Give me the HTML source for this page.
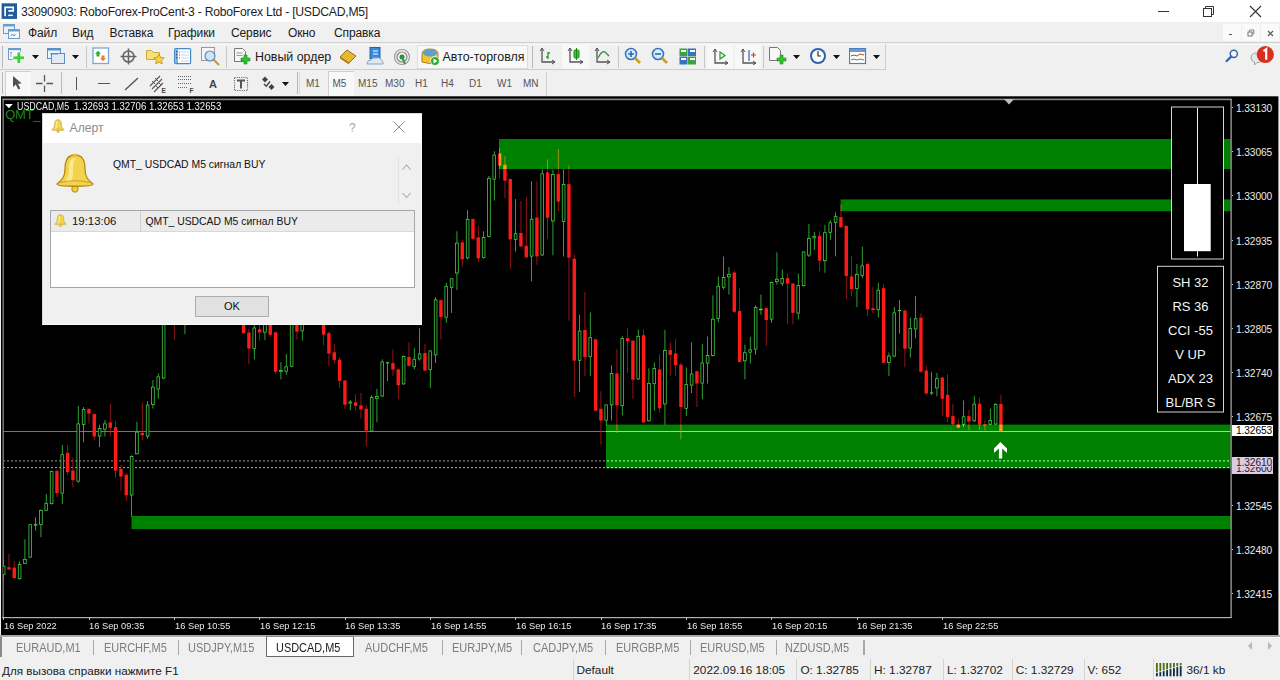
<!DOCTYPE html><html><head><meta charset="utf-8"><title>MT4</title><style>
*{margin:0;padding:0;box-sizing:border-box}
html,body{width:1280px;height:680px;overflow:hidden;background:#f0f0f0;font-family:"Liberation Sans", sans-serif;position:relative}
.t{position:absolute;white-space:nowrap;font-family:"Liberation Sans", sans-serif}
.a{position:absolute}

</style></head><body>
<div class="a" style="left:0px;top:0px;width:1280px;height:22.4px;background:#fff;"></div><svg class="a" style="left:0px;top:0px;" width="20" height="22" viewBox="0 0 20 22"><rect x="1.6" y="3.3" width="15.4" height="15.6" fill="#1f5b9e"/><path d="M5.1 16.2 V7.3 H13.2 V10.9 H8.3" fill="none" stroke="#fff" stroke-width="1.7"/><rect x="8.2" y="14.6" width="4.6" height="1.5" fill="#fff"/></svg><div class="t" style="left:21px;top:5.9px;font-size:12.2px;line-height:1;color:#1e1e1e;letter-spacing:-0.25px">33090903: RoboForex-ProCent-3 - RoboForex Ltd - [USDCAD,M5]</div><div class="a" style="left:1158px;top:10.5px;width:11px;height:1px;background:#333;"></div><svg class="a" style="left:1201px;top:5px;" width="14" height="13" viewBox="0 0 14 13"><rect x="2.5" y="3.5" width="8" height="8" fill="none" stroke="#333" stroke-width="1"/><path d="M4.5 3.5 V1.5 H12.5 V9.5 H10.5" fill="none" stroke="#333" stroke-width="1"/></svg><svg class="a" style="left:1249px;top:5px;" width="13" height="13" viewBox="0 0 13 13"><path d="M1 1 L12 12 M12 1 L1 12" stroke="#333" stroke-width="1.1"/></svg>
<div class="a" style="left:0px;top:22.4px;width:1280px;height:20px;background:#f0f0f0;"></div><div class="a" style="left:0px;top:42px;width:1280px;height:1.3px;background:#d0d0d0;"></div><div class="a" style="left:0px;top:44px;width:1280px;height:1px;background:#f8f8f8;"></div><svg class="a" style="left:3px;top:23px;" width="18" height="18" viewBox="0 0 18 18"><rect x="0.5" y="1.5" width="11" height="9" fill="#eaf2fb" stroke="#6c9ccc"/><rect x="0.5" y="1.5" width="11" height="2" fill="#6c9ccc"/><rect x="5.5" y="6.5" width="11" height="9" fill="#f4f8fc" stroke="#6c9ccc"/><rect x="5.5" y="6.5" width="11" height="2" fill="#6c9ccc"/><path d="M8 13 l1.5 -2 l1.5 2 l1.5 -2" stroke="#5577aa" fill="none" stroke-width="0.8"/></svg><div class="t" style="left:28px;top:26.7px;font-size:12px;line-height:1;color:#1a1a1a;letter-spacing:-0.12px">Файл</div><div class="t" style="left:72px;top:26.7px;font-size:12px;line-height:1;color:#1a1a1a;letter-spacing:-0.12px">Вид</div><div class="t" style="left:109.5px;top:26.7px;font-size:12px;line-height:1;color:#1a1a1a;letter-spacing:-0.12px">Вставка</div><div class="t" style="left:168px;top:26.7px;font-size:12px;line-height:1;color:#1a1a1a;letter-spacing:-0.12px">Графики</div><div class="t" style="left:231px;top:26.7px;font-size:12px;line-height:1;color:#1a1a1a;letter-spacing:-0.12px">Сервис</div><div class="t" style="left:288px;top:26.7px;font-size:12px;line-height:1;color:#1a1a1a;letter-spacing:-0.12px">Окно</div><div class="t" style="left:334px;top:26.7px;font-size:12px;line-height:1;color:#1a1a1a;letter-spacing:-0.12px">Справка</div><div class="a" style="left:1223px;top:24px;width:18px;height:17px;background:#fafafa;"></div><div class="a" style="left:1242px;top:24px;width:18px;height:17px;background:#fafafa;"></div><div class="a" style="left:1261px;top:24px;width:18px;height:17px;background:#fafafa;"></div><div class="a" style="left:1228.6px;top:34.2px;width:3.6px;height:1.3px;background:#555;"></div><svg class="a" style="left:1247px;top:29px;" width="8" height="8" viewBox="0 0 8 8"><rect x="1" y="3" width="4" height="4" fill="none" stroke="#666" stroke-width="0.9"/><path d="M2.6 2.6 V1 H6.8 V5 H5.2" fill="none" stroke="#666" stroke-width="0.8"/></svg><svg class="a" style="left:1267px;top:30px;" width="7" height="7" viewBox="0 0 7 7"><path d="M1 1 L6 6 M6 1 L1 6" stroke="#555" stroke-width="1.2"/></svg>
<div class="a" style="left:0px;top:43.3px;width:1280px;height:26px;background:#f0f0f0;"></div><div class="a" style="left:0px;top:44px;width:1280px;height:1px;background:#f8f8f8;"></div><div class="a" style="left:0px;top:68.8px;width:886px;height:1.2px;background:#cdcdcd;"></div><div class="a" style="left:885px;top:44px;width:1.2px;height:25px;background:#cdcdcd;"></div><div class="a" style="left:0px;top:70px;width:886px;height:1px;background:#fafafa;"></div><div class="a" style="left:2px;top:46px;width:1px;height:22px;background:#b8b8b8;"></div><svg class="a" style="left:7px;top:47px;" width="20" height="18" viewBox="0 0 20 18"><rect x="1.5" y="1.5" width="12" height="11" fill="#f4f8fc" stroke="#6a9ad0"/><rect x="1.5" y="1.5" width="12" height="1.6" fill="#6a9ad0"/><path d="M4 5 v5 M3 6 l1 -1 l1 1" stroke="#8a9aaa" fill="none" stroke-width="0.8"/><path d="M10 5 h3.6 v4 h4 v3.6 h-4 v4 h-3.6 v-4 h-4 v-3.6 h4 z" fill="#3ad03a" stroke="#fff" stroke-width="0.8"/></svg><svg class="a" style="left:32px;top:55px;" width="7" height="4" viewBox="0 0 7 4"><path d="M0 0 H7 L3.5 4 Z" fill="#111"/></svg><svg class="a" style="left:47px;top:47px;" width="20" height="18" viewBox="0 0 20 18"><rect x="0.5" y="1.5" width="13" height="10" fill="#eef4fb" stroke="#5b8fc7"/><rect x="0.5" y="1.5" width="13" height="2" fill="#5b8fc7"/><rect x="4.5" y="6.5" width="13" height="10" fill="#e2ebf5" stroke="#5b8fc7"/><path d="M3 7 h8" stroke="#5b8fc7"/></svg><svg class="a" style="left:72px;top:55px;" width="7" height="4" viewBox="0 0 7 4"><path d="M0 0 H7 L3.5 4 Z" fill="#111"/></svg><div class="a" style="left:86px;top:46px;width:1px;height:22px;background:#c8c8c8;"></div><svg class="a" style="left:92px;top:47px;" width="18" height="18" viewBox="0 0 18 18"><rect x="1" y="1" width="15.5" height="15.5" fill="#fff" stroke="#7aa6d8" stroke-width="1.3"/><path d="M6 3.8 L9 6.8 L7.5 6.8 L7.5 9.5 L4.5 9.5 L4.5 6.8 L3 6.8 Z" fill="#30b030"/><path d="M11 14.2 L14 11.2 L12.5 11.2 L12.5 8.5 L9.5 8.5 L9.5 11.2 L8 11.2 Z" fill="#f07a40"/></svg><svg class="a" style="left:120px;top:48px;" width="18" height="18" viewBox="0 0 18 18"><circle cx="8.5" cy="8.5" r="5.5" fill="none" stroke="#666" stroke-width="1.6"/><path d="M8.5 0.5 V16.5 M0.5 8.5 H16.5" stroke="#666" stroke-width="1.6"/></svg><svg class="a" style="left:146px;top:48px;" width="20" height="18" viewBox="0 0 20 18"><path d="M0.5 2.5 h5 l2 2 h6 v7 h-13 z" fill="#f5e27a" stroke="#c9a93a"/><path d="M13 6 l1.6 3.3 3.6 0.5 -2.6 2.5 0.6 3.6 -3.2 -1.7 -3.2 1.7 0.6 -3.6 -2.6 -2.5 3.6 -0.5z" fill="#f7d43a" stroke="#b8901a" stroke-width="0.8"/></svg><svg class="a" style="left:174px;top:48px;" width="18" height="17" viewBox="0 0 18 17"><rect x="0.6" y="0.6" width="16" height="15" rx="1" fill="#fff" stroke="#4a88cc" stroke-width="1.2"/><rect x="1.2" y="1.2" width="2.8" height="13.8" fill="#7aaee0"/><path d="M2.6 3 v1.2 M2.6 6 v1.2 M2.6 9 v1.2" stroke="#1a3a7a" stroke-width="1"/><path d="M5.5 3.5 v1 M5.5 6.5 v1 M5.5 9.5 v1" stroke="#d03030" stroke-width="1"/><path d="M7 4 h8 M7 7 h8 M7 10 h8 M7 13 h8" stroke="#b8cce4" stroke-width="0.8"/></svg><svg class="a" style="left:201px;top:47px;" width="20" height="20" viewBox="0 0 20 20"><rect x="0.5" y="0.5" width="13" height="13" fill="#f4f4f4" stroke="#999"/><circle cx="9" cy="9" r="5" fill="#cfe3f5" stroke="#5a8cc0" stroke-width="1.2"/><path d="M12.5 12.5 L18 18" stroke="#c9a020" stroke-width="2.2"/></svg><div class="a" style="left:226px;top:46px;width:1px;height:22px;background:#c8c8c8;"></div><svg class="a" style="left:234px;top:48px;" width="18" height="19" viewBox="0 0 18 19"><path d="M0.5 0.5 h8 l3 3 v10 h-11 z" fill="#f6f6f6" stroke="#777"/><path d="M2.5 5 h6 M2.5 7.5 h6" stroke="#999"/><path d="M7 10 h3 v-3 h3 v3 h3 v3 h-3 v3 h-3 v-3 h-3 z" fill="#2fc12f" stroke="#1a8a1a" stroke-width="0.6"/></svg><div class="t" style="left:255px;top:50.6px;font-size:12.4px;line-height:1;color:#1a1a1a;">Новый ордер</div><svg class="a" style="left:339px;top:48px;" width="18" height="17" viewBox="0 0 18 17"><path d="M1 9 L8 2 L17 8 L10 15 Z" fill="#e8b830" stroke="#9a6a10" stroke-width="1"/><path d="M1 9 L10 15 L10 16.5 L1 10.5Z" fill="#b07a18"/></svg><svg class="a" style="left:366px;top:47px;" width="18" height="19" viewBox="0 0 18 19"><rect x="4" y="0.5" width="10" height="11" fill="#3a8ad8" stroke="#2a60a0"/><path d="M7 4 h5 M7 7 h5" stroke="#fff"/><path d="M1 17 q0 -4 4 -4 q1 -3 5 -2 q5 -1 6 3 q2 1 1 3 z" fill="#dde8f4" stroke="#8aa4c4"/></svg><svg class="a" style="left:393px;top:48px;" width="18" height="18" viewBox="0 0 18 18"><circle cx="9" cy="9" r="7.5" fill="none" stroke="#999" stroke-width="1.2"/><circle cx="9" cy="9" r="5" fill="none" stroke="#888" stroke-width="1.2"/><circle cx="9" cy="9" r="2.5" fill="#2a8a3a"/><path d="M9 9 L12 16" stroke="#3a9a4a" stroke-width="2"/></svg><div class="a" style="left:417px;top:45px;width:111px;height:24px;background:#f8f8f8;border:1px solid #dcdcdc"></div><svg class="a" style="left:421px;top:48px;" width="20" height="18" viewBox="0 0 20 18"><path d="M1 6 q0 -5 8 -5 q8 0 8 5 v8 q-8 3 -16 0 z" fill="#f2c530" stroke="#a88414"/><ellipse cx="9" cy="5" rx="7" ry="3.5" fill="#5aa0d0"/><circle cx="14" cy="13" r="4.5" fill="#2faa3a" stroke="#fff" stroke-width="0.8"/><path d="M12.5 10.5 L16.5 13 L12.5 15.5Z" fill="#fff"/></svg><div class="t" style="left:442.6px;top:50.6px;font-size:12.4px;line-height:1;color:#1a1a1a;">Авто-торговля</div><div class="a" style="left:532px;top:46px;width:1px;height:22px;background:#b8b8b8;"></div><svg class="a" style="left:539px;top:47px;" width="18" height="18" viewBox="0 0 18 18"><path d="M3 1 V15 H16" fill="none" stroke="#555" stroke-width="1.3"/><path d="M1 4 L3 1 L5 4 M13 13 L16 15 L13 17" fill="none" stroke="#555" stroke-width="1"/><path d="M9 12 V5 M9 6 h2 M7 10 h2" stroke="#2a9a2a" stroke-width="1.3"/></svg><div class="a" style="left:562px;top:45px;width:27px;height:24px;background:#f8f8f8;"></div><svg class="a" style="left:567px;top:47px;" width="18" height="18" viewBox="0 0 18 18"><path d="M3 1 V15 H16" fill="none" stroke="#555" stroke-width="1.3"/><path d="M1 4 L3 1 L5 4 M13 13 L16 15 L13 17" fill="none" stroke="#555" stroke-width="1"/><rect x="7" y="3" width="5" height="8" rx="1.2" fill="#33cc33" stroke="#1a8a1a"/><path d="M9.5 1 V13" stroke="#1a8a1a"/></svg><svg class="a" style="left:594px;top:47px;" width="18" height="18" viewBox="0 0 18 18"><path d="M3 1 V15 H16" fill="none" stroke="#555" stroke-width="1.3"/><path d="M1 4 L3 1 L5 4 M13 13 L16 15 L13 17" fill="none" stroke="#555" stroke-width="1"/><path d="M4 11 Q8 3 11 5 L15 9" fill="none" stroke="#2a8a2a" stroke-width="1.2"/></svg><div class="a" style="left:618px;top:46px;width:1px;height:22px;background:#c8c8c8;"></div><svg class="a" style="left:624px;top:47px;" width="18" height="18" viewBox="0 0 18 18"><circle cx="7" cy="7" r="5.5" fill="#d9ecfa" stroke="#3577c0" stroke-width="1.6"/><path d="M11 11 L16 16" stroke="#c9a020" stroke-width="2.6"/><path d="M4 7 h6 M7 4 v6" stroke="#2c6ab0" stroke-width="1.6"/></svg><svg class="a" style="left:651px;top:47px;" width="18" height="18" viewBox="0 0 18 18"><circle cx="7" cy="7" r="5.5" fill="#d9ecfa" stroke="#3577c0" stroke-width="1.6"/><path d="M11 11 L16 16" stroke="#c9a020" stroke-width="2.6"/><path d="M4 7 h6" stroke="#2c6ab0" stroke-width="1.6"/></svg><svg class="a" style="left:679px;top:48px;" width="18" height="17" viewBox="0 0 18 17"><rect x="0.5" y="0.5" width="8" height="7.5" fill="#3fa03f"/><rect x="9" y="0.5" width="8" height="7.5" fill="#3a70c0"/><rect x="0.5" y="8.5" width="8" height="8" fill="#3a70c0"/><rect x="9" y="8.5" width="8" height="8" fill="#3fa03f"/><path d="M2 3 h5 M11 3 h5 M2 11 h5 M11 11 h5" stroke="#fff" stroke-width="2"/></svg><div class="a" style="left:704px;top:46px;width:1px;height:22px;background:#c8c8c8;"></div><div class="a" style="left:707px;top:45px;width:26px;height:24px;background:#f8f8f8;"></div><svg class="a" style="left:712px;top:48px;" width="18" height="17" viewBox="0 0 18 17"><path d="M3 1 V15 H16" fill="none" stroke="#555" stroke-width="1.3"/><path d="M1 4 L3 1 L5 4 M13 13 L16 15 L13 17" fill="none" stroke="#555" stroke-width="1"/><path d="M8 4 L13 7.5 L8 11 Z" fill="none" stroke="#2a9a2a" stroke-width="1.2"/></svg><div class="a" style="left:735px;top:45px;width:26px;height:24px;background:#f8f8f8;"></div><svg class="a" style="left:740px;top:48px;" width="18" height="17" viewBox="0 0 18 17"><path d="M3 1 V15 H16" fill="none" stroke="#555" stroke-width="1.3"/><path d="M1 4 L3 1 L5 4 M13 13 L16 15 L13 17" fill="none" stroke="#555" stroke-width="1"/><path d="M9 2 V13" stroke="#3a70c0" stroke-width="1.3"/><path d="M11 7 h5 M13.5 4.5 v5" stroke="#d04020" stroke-width="1.2"/></svg><div class="a" style="left:763px;top:46px;width:1px;height:22px;background:#c8c8c8;"></div><svg class="a" style="left:769px;top:47px;" width="20" height="19" viewBox="0 0 20 19"><path d="M0.5 0.5 h8 l3 3 v10 h-11 z" fill="#f6f6f6" stroke="#777"/><path d="M8 11 h3 v-3 h3 v3 h3 v3 h-3 v3 h-3 v-3 h-3 z" fill="#2fc12f" stroke="#1a8a1a" stroke-width="0.6"/></svg><svg class="a" style="left:793px;top:55px;" width="7" height="4" viewBox="0 0 7 4"><path d="M0 0 H7 L3.5 4 Z" fill="#111"/></svg><svg class="a" style="left:809px;top:47px;" width="18" height="18" viewBox="0 0 18 18"><circle cx="9" cy="9" r="8" fill="#2a62b0"/><circle cx="9" cy="9" r="6" fill="#fff"/><path d="M9 4 V9 H12" stroke="#333" stroke-width="1.2" fill="none"/></svg><svg class="a" style="left:833px;top:55px;" width="7" height="4" viewBox="0 0 7 4"><path d="M0 0 H7 L3.5 4 Z" fill="#111"/></svg><svg class="a" style="left:849px;top:48px;" width="18" height="17" viewBox="0 0 18 17"><rect x="0.5" y="0.5" width="16" height="15" fill="#fff" stroke="#4a80c0" stroke-width="1.2"/><rect x="1" y="1" width="15" height="3" fill="#6a9ad0"/><path d="M2 8 l3 -1 3 1 3 -2 4 1" stroke="#c04020" fill="none"/><path d="M2 12 l3 -1 3 1 3 -1 4 1" stroke="#3a9a3a" fill="none"/></svg><svg class="a" style="left:873px;top:55px;" width="7" height="4" viewBox="0 0 7 4"><path d="M0 0 H7 L3.5 4 Z" fill="#111"/></svg><svg class="a" style="left:1224px;top:48px;" width="16" height="16" viewBox="0 0 16 16"><circle cx="9.8" cy="5.8" r="3.6" fill="#f4f6fa" stroke="#3c64aa" stroke-width="1.5"/><path d="M7.2 8.6 L2.6 13" stroke="#3c64aa" stroke-width="2.4" stroke-linecap="round"/></svg><svg class="a" style="left:1248px;top:44px;" width="28" height="24" viewBox="0 0 28 24"><path d="M3 14 q0 -5 6 -5 q6 0 6 5 q0 4.5 -6 4.5 l-2.5 2.5 0 -3 q-3.5 -1 -3.5 -4z" fill="#e8e8e8" stroke="#9a9a9a" stroke-width="0.9"/><circle cx="17.3" cy="10.5" r="8.6" fill="#d8301e"/><path d="M15.5 7.2 L18.2 5.2 V15.8" stroke="#fff" stroke-width="2.2" fill="none"/></svg>
<div class="a" style="left:0px;top:70px;width:1280px;height:26px;background:#f0f0f0;"></div><div class="a" style="left:2px;top:72px;width:1px;height:22px;background:#b8b8b8;"></div><div class="a" style="left:5px;top:71px;width:26px;height:25px;background:#f8f8f8;border-top:1px solid #d0d0d0;border-left:1px solid #d0d0d0"></div><svg class="a" style="left:12px;top:75px;" width="12" height="16" viewBox="0 0 12 16"><path d="M1 1 L1 12 L3.8 9.6 L6.2 14.5 L8.3 13.5 L6 8.8 L9.8 8.5 Z" fill="#505050"/></svg><svg class="a" style="left:36px;top:75px;" width="17" height="17" viewBox="0 0 17 17"><path d="M8.5 0 V6.5 M8.5 10.5 V17 M0 8.5 H6.5 M10.5 8.5 H17" stroke="#555" stroke-width="1.3"/></svg><div class="a" style="left:61px;top:72px;width:1px;height:22px;background:#b8b8b8;"></div><div class="a" style="left:75.5px;top:77px;width:1.5px;height:13px;background:#555;"></div><div class="a" style="left:98px;top:82.5px;width:12px;height:1.5px;background:#555;"></div><svg class="a" style="left:124px;top:77px;" width="15" height="14" viewBox="0 0 15 14"><path d="M1 13 L14 1" stroke="#555" stroke-width="1.4"/></svg><svg class="a" style="left:149px;top:75px;" width="18" height="18" viewBox="0 0 18 18"><path d="M1 11 L11 1 M3 14 L13 4 M5 17 L14 8" stroke="#555" stroke-width="1.1"/><path d="M3 6 l3 3 M6 3 l3 3 M6 10 l3 3 M9 7 l3 3" stroke="#555" stroke-width="1"/><text x="12.5" y="17.5" font-size="6.5" font-weight="bold" fill="#444" font-family="Liberation Sans">E</text></svg><svg class="a" style="left:177px;top:75px;" width="18" height="18" viewBox="0 0 18 18"><path d="M1 1.5 h13 M1 4.5 h13 M1 8.5 h13 M1 12.5 h10" stroke="#666" stroke-width="1" stroke-dasharray="1 1"/><text x="12.5" y="17.5" font-size="6.5" font-weight="bold" fill="#444" font-family="Liberation Sans">F</text></svg><div class="t" style="left:209px;top:78.5px;font-size:11px;line-height:1;color:#444;font-weight:bold">A</div><svg class="a" style="left:233px;top:75.5px;" width="16" height="16" viewBox="0 0 16 16"><rect x="1.5" y="1.5" width="13" height="13" fill="none" stroke="#666" stroke-width="1.1" stroke-dasharray="1.1 1.1"/><path d="M4 4.6 H12 M8 4.6 V12.5" stroke="#555" stroke-width="2"/></svg><svg class="a" style="left:259px;top:75px;" width="18" height="17" viewBox="0 0 18 17"><path d="M6 1.5 L9 4.5 L6 7.5 L3 4.5Z" fill="#444"/><path d="M5 9 L7.3 11.3 L11 6.5" fill="none" stroke="#444" stroke-width="1.4"/><path d="M12.5 9 L15.5 12 L12.5 15 L9.5 12Z" fill="#444"/></svg><svg class="a" style="left:282px;top:82px;" width="7" height="4" viewBox="0 0 7 4"><path d="M0 0 H7 L3.5 4 Z" fill="#111"/></svg><div class="a" style="left:297px;top:72px;width:1px;height:22px;background:#b8b8b8;"></div><div class="a" style="left:299px;top:72px;width:1px;height:22px;background:#d8d8d8;"></div><div class="a" style="left:328px;top:71px;width:26px;height:25px;background:#f8f8f8;border-top:1px solid #d0d0d0;border-left:1px solid #d0d0d0"></div><div class="t" style="left:306px;top:78.5px;font-size:10px;line-height:1;color:#555;">M1</div><div class="t" style="left:332.5px;top:78.5px;font-size:10px;line-height:1;color:#555;">M5</div><div class="t" style="left:358px;top:78.5px;font-size:10px;line-height:1;color:#555;">M15</div><div class="t" style="left:385px;top:78.5px;font-size:10px;line-height:1;color:#555;">M30</div><div class="t" style="left:415px;top:78.5px;font-size:10px;line-height:1;color:#555;">H1</div><div class="t" style="left:441px;top:78.5px;font-size:10px;line-height:1;color:#555;">H4</div><div class="t" style="left:469px;top:78.5px;font-size:10px;line-height:1;color:#555;">D1</div><div class="t" style="left:497px;top:78.5px;font-size:10px;line-height:1;color:#555;">W1</div><div class="t" style="left:523px;top:78.5px;font-size:10px;line-height:1;color:#555;">MN</div><div class="a" style="left:546px;top:72px;width:1px;height:24px;background:#d0d0d0;"></div>
<svg class="chart" width="1280" height="540" viewBox="0 96 1280 540" style="position:absolute;left:0;top:96px">
<rect x="1" y="96.3" width="1277.4" height="540" fill="#000"/>
<rect x="2.5" y="98.6" width="1229" height="1.6" fill="#8a8a8a"/>
<rect x="2.5" y="98.6" width="1.3" height="519" fill="#8a8a8a"/>
<defs><clipPath id="pc"><rect x="3.2" y="100" width="1227.5" height="517"/></clipPath></defs>
<g clip-path="url(#pc)">
<rect x="499" y="139" width="732" height="30" fill="#008000"/><rect x="840.6" y="199.4" width="390.4" height="11.799999999999983" fill="#008000"/><rect x="606" y="424.6" width="625" height="43.69999999999999" fill="#008000"/><rect x="131.5" y="516" width="1099.5" height="13" fill="#008000"/>
<g style="mix-blend-mode:plus-lighter"><rect x="3" y="431" width="1228" height="1" fill="#747474"/><line x1="3" y1="460.9" x2="1231" y2="460.9" stroke="#7a7a7a" stroke-width="1.2" stroke-dasharray="2 2"/><line x1="3" y1="467.6" x2="1231" y2="467.6" stroke="#aaaaaa" stroke-width="1.0" stroke-dasharray="2 2"/><rect x="3.20" y="559.2" width="0.8" height="21.0" fill="#3cc83c"/><rect x="2.25" y="566.2" width="2.70" height="8.1" fill="#000" stroke="#48d848" stroke-width="0.75"/><rect x="8.53" y="553.7" width="0.8" height="16.6" fill="#b81a1a"/><rect x="7.23" y="567.2" width="3.40" height="2.2" fill="#ff1a1a"/><rect x="13.87" y="561.0" width="0.8" height="17.7" fill="#b81a1a"/><rect x="12.57" y="567.6" width="3.40" height="10.4" fill="#ff1a1a"/><rect x="19.20" y="561.4" width="0.8" height="18.1" fill="#3cc83c"/><rect x="18.25" y="564.6" width="2.70" height="14.1" fill="#000" stroke="#48d848" stroke-width="0.75"/><rect x="24.53" y="539.3" width="0.8" height="24.7" fill="#3cc83c"/><rect x="23.58" y="559.6" width="2.70" height="3.7" fill="#000" stroke="#48d848" stroke-width="0.75"/><rect x="29.87" y="524.3" width="0.8" height="33.8" fill="#3cc83c"/><rect x="28.92" y="524.7" width="2.70" height="32.4" fill="#000" stroke="#48d848" stroke-width="0.75"/><rect x="35.20" y="517.3" width="0.8" height="13.2" fill="#3cc83c"/><rect x="34.25" y="524.2" width="2.70" height="1.1" fill="#000" stroke="#48d848" stroke-width="0.75"/><rect x="40.53" y="509.5" width="0.8" height="27.6" fill="#3cc83c"/><rect x="39.58" y="510.5" width="2.70" height="14.1" fill="#000" stroke="#48d848" stroke-width="0.75"/><rect x="45.87" y="494.1" width="0.8" height="17.0" fill="#3cc83c"/><rect x="44.92" y="503.3" width="2.70" height="7.0" fill="#000" stroke="#48d848" stroke-width="0.75"/><rect x="51.20" y="470.9" width="0.8" height="33.6" fill="#3cc83c"/><rect x="50.25" y="471.3" width="2.70" height="32.4" fill="#000" stroke="#48d848" stroke-width="0.75"/><rect x="56.53" y="469.8" width="0.8" height="27.2" fill="#b81a1a"/><rect x="55.23" y="470.9" width="3.40" height="22.1" fill="#ff1a1a"/><rect x="61.87" y="444.9" width="0.8" height="59.2" fill="#3cc83c"/><rect x="60.92" y="454.7" width="2.70" height="38.4" fill="#000" stroke="#48d848" stroke-width="0.75"/><rect x="67.20" y="444.9" width="0.8" height="30.0" fill="#b81a1a"/><rect x="65.90" y="452.8" width="3.40" height="19.2" fill="#ff1a1a"/><rect x="72.53" y="457.7" width="0.8" height="29.8" fill="#b81a1a"/><rect x="71.23" y="470.5" width="3.40" height="9.7" fill="#ff1a1a"/><rect x="77.87" y="405.9" width="0.8" height="76.8" fill="#3cc83c"/><rect x="76.92" y="423.9" width="2.70" height="57.3" fill="#000" stroke="#48d848" stroke-width="0.75"/><rect x="83.20" y="407.1" width="0.8" height="35.3" fill="#3cc83c"/><rect x="82.25" y="409.3" width="2.70" height="15.1" fill="#000" stroke="#48d848" stroke-width="0.75"/><rect x="88.53" y="408.2" width="0.8" height="15.3" fill="#b81a1a"/><rect x="87.23" y="408.9" width="3.40" height="4.7" fill="#ff1a1a"/><rect x="93.87" y="412.9" width="0.8" height="27.1" fill="#b81a1a"/><rect x="92.57" y="414.1" width="3.40" height="22.4" fill="#ff1a1a"/><rect x="99.20" y="424.7" width="0.8" height="22.4" fill="#3cc83c"/><rect x="98.25" y="428.6" width="2.70" height="7.5" fill="#000" stroke="#48d848" stroke-width="0.75"/><rect x="104.53" y="420.0" width="0.8" height="16.5" fill="#3cc83c"/><rect x="103.58" y="423.9" width="2.70" height="5.2" fill="#000" stroke="#48d848" stroke-width="0.75"/><rect x="109.87" y="403.5" width="0.8" height="32.9" fill="#b81a1a"/><rect x="108.57" y="422.4" width="3.40" height="5.4" fill="#ff1a1a"/><rect x="115.20" y="420.7" width="0.8" height="56.9" fill="#b81a1a"/><rect x="113.90" y="427.1" width="3.40" height="43.5" fill="#ff1a1a"/><rect x="120.53" y="464.7" width="0.8" height="25.9" fill="#b81a1a"/><rect x="119.23" y="468.7" width="3.40" height="7.8" fill="#ff1a1a"/><rect x="125.87" y="472.9" width="0.8" height="28.2" fill="#b81a1a"/><rect x="124.57" y="474.8" width="3.40" height="20.5" fill="#ff1a1a"/><rect x="131.20" y="455.3" width="0.8" height="61.2" fill="#3cc83c"/><rect x="130.25" y="456.4" width="2.70" height="38.6" fill="#000" stroke="#48d848" stroke-width="0.75"/><rect x="136.53" y="421.6" width="0.8" height="32.9" fill="#3cc83c"/><rect x="135.58" y="432.1" width="2.70" height="21.7" fill="#000" stroke="#48d848" stroke-width="0.75"/><rect x="141.87" y="402.4" width="0.8" height="37.6" fill="#b81a1a"/><rect x="140.57" y="432.9" width="3.40" height="2.4" fill="#ff1a1a"/><rect x="147.20" y="401.2" width="0.8" height="37.6" fill="#3cc83c"/><rect x="146.25" y="405.1" width="2.70" height="31.1" fill="#000" stroke="#48d848" stroke-width="0.75"/><rect x="152.53" y="380.0" width="0.8" height="28.6" fill="#3cc83c"/><rect x="151.58" y="387.1" width="2.70" height="17.3" fill="#000" stroke="#48d848" stroke-width="0.75"/><rect x="157.87" y="373.3" width="0.8" height="25.5" fill="#3cc83c"/><rect x="156.92" y="376.8" width="2.70" height="12.2" fill="#000" stroke="#48d848" stroke-width="0.75"/><rect x="163.20" y="320.0" width="0.8" height="58.8" fill="#3cc83c"/><rect x="162.25" y="320.4" width="2.70" height="57.7" fill="#000" stroke="#48d848" stroke-width="0.75"/><rect x="173.87" y="320.0" width="0.8" height="20.0" fill="#b81a1a"/><rect x="172.57" y="320.0" width="3.40" height="0.8" fill="#ff1a1a"/><rect x="184.53" y="320.0" width="0.8" height="14.1" fill="#3cc83c"/><rect x="183.58" y="320.4" width="2.70" height="0.3" fill="#000" stroke="#48d848" stroke-width="0.75"/><rect x="243.20" y="320.0" width="0.8" height="13.6" fill="#b81a1a"/><rect x="241.90" y="320.0" width="3.40" height="13.2" fill="#ff1a1a"/><rect x="248.53" y="328.8" width="0.8" height="35.6" fill="#b81a1a"/><rect x="247.23" y="332.6" width="3.40" height="15.9" fill="#ff1a1a"/><rect x="253.87" y="320.0" width="0.8" height="39.4" fill="#3cc83c"/><rect x="252.92" y="328.0" width="2.70" height="20.5" fill="#000" stroke="#48d848" stroke-width="0.75"/><rect x="259.20" y="320.0" width="0.8" height="20.6" fill="#b81a1a"/><rect x="257.90" y="329.3" width="3.40" height="3.1" fill="#ff1a1a"/><rect x="264.53" y="320.0" width="0.8" height="20.1" fill="#3cc83c"/><rect x="263.58" y="320.4" width="2.70" height="11.7" fill="#000" stroke="#48d848" stroke-width="0.75"/><rect x="269.87" y="320.0" width="0.8" height="17.1" fill="#b81a1a"/><rect x="268.57" y="320.0" width="3.40" height="14.7" fill="#ff1a1a"/><rect x="275.20" y="331.6" width="0.8" height="41.9" fill="#b81a1a"/><rect x="273.90" y="332.4" width="3.40" height="39.3" fill="#ff1a1a"/><rect x="280.53" y="362.2" width="0.8" height="17.2" fill="#3cc83c"/><rect x="279.58" y="370.4" width="2.70" height="0.9" fill="#000" stroke="#48d848" stroke-width="0.75"/><rect x="285.87" y="354.2" width="0.8" height="20.5" fill="#3cc83c"/><rect x="284.92" y="366.8" width="2.70" height="4.5" fill="#000" stroke="#48d848" stroke-width="0.75"/><rect x="291.20" y="320.0" width="0.8" height="46.9" fill="#3cc83c"/><rect x="290.25" y="320.4" width="2.70" height="45.8" fill="#000" stroke="#48d848" stroke-width="0.75"/><rect x="296.53" y="320.0" width="0.8" height="19.4" fill="#b81a1a"/><rect x="295.23" y="320.0" width="3.40" height="11.6" fill="#ff1a1a"/><rect x="301.87" y="320.0" width="0.8" height="20.6" fill="#3cc83c"/><rect x="300.92" y="320.4" width="2.70" height="10.5" fill="#000" stroke="#48d848" stroke-width="0.75"/><rect x="323.20" y="320.0" width="0.8" height="25.3" fill="#b81a1a"/><rect x="321.90" y="320.0" width="3.40" height="14.7" fill="#ff1a1a"/><rect x="328.53" y="331.2" width="0.8" height="34.8" fill="#b81a1a"/><rect x="327.23" y="333.1" width="3.40" height="20.5" fill="#ff1a1a"/><rect x="333.87" y="343.8" width="0.8" height="20.0" fill="#b81a1a"/><rect x="332.57" y="352.3" width="3.40" height="7.6" fill="#ff1a1a"/><rect x="339.20" y="357.4" width="0.8" height="30.6" fill="#b81a1a"/><rect x="337.90" y="359.7" width="3.40" height="21.2" fill="#ff1a1a"/><rect x="344.53" y="380.0" width="0.8" height="28.7" fill="#b81a1a"/><rect x="343.23" y="380.5" width="3.40" height="24.2" fill="#ff1a1a"/><rect x="349.87" y="400.0" width="0.8" height="10.1" fill="#3cc83c"/><rect x="348.92" y="402.0" width="2.70" height="1.2" fill="#000" stroke="#48d848" stroke-width="0.75"/><rect x="355.20" y="394.1" width="0.8" height="16.5" fill="#b81a1a"/><rect x="353.90" y="402.4" width="3.40" height="3.5" fill="#ff1a1a"/><rect x="360.53" y="392.9" width="0.8" height="25.9" fill="#b81a1a"/><rect x="359.23" y="405.4" width="3.40" height="4.0" fill="#ff1a1a"/><rect x="365.87" y="404.7" width="0.8" height="41.6" fill="#b81a1a"/><rect x="364.57" y="408.7" width="3.40" height="21.9" fill="#ff1a1a"/><rect x="371.20" y="395.3" width="0.8" height="36.5" fill="#3cc83c"/><rect x="370.25" y="397.3" width="2.70" height="33.7" fill="#000" stroke="#48d848" stroke-width="0.75"/><rect x="376.53" y="388.9" width="0.8" height="33.4" fill="#3cc83c"/><rect x="375.58" y="396.4" width="2.70" height="2.1" fill="#000" stroke="#48d848" stroke-width="0.75"/><rect x="381.87" y="359.3" width="0.8" height="37.6" fill="#3cc83c"/><rect x="380.92" y="362.0" width="2.70" height="34.1" fill="#000" stroke="#48d848" stroke-width="0.75"/><rect x="387.20" y="361.6" width="0.8" height="19.5" fill="#3cc83c"/><rect x="386.25" y="362.7" width="2.70" height="0.3" fill="#000" stroke="#48d848" stroke-width="0.75"/><rect x="392.53" y="349.4" width="0.8" height="26.4" fill="#b81a1a"/><rect x="391.23" y="363.1" width="3.40" height="6.4" fill="#ff1a1a"/><rect x="397.87" y="368.2" width="0.8" height="31.1" fill="#b81a1a"/><rect x="396.57" y="369.4" width="3.40" height="15.8" fill="#ff1a1a"/><rect x="403.20" y="355.3" width="0.8" height="29.4" fill="#3cc83c"/><rect x="402.25" y="356.4" width="2.70" height="27.5" fill="#000" stroke="#48d848" stroke-width="0.75"/><rect x="408.53" y="342.4" width="0.8" height="24.0" fill="#b81a1a"/><rect x="407.23" y="356.9" width="3.40" height="8.9" fill="#ff1a1a"/><rect x="413.87" y="348.2" width="0.8" height="21.2" fill="#3cc83c"/><rect x="412.92" y="359.2" width="2.70" height="7.5" fill="#000" stroke="#48d848" stroke-width="0.75"/><rect x="419.20" y="328.2" width="0.8" height="32.5" fill="#3cc83c"/><rect x="418.25" y="354.0" width="2.70" height="4.9" fill="#000" stroke="#48d848" stroke-width="0.75"/><rect x="424.53" y="344.2" width="0.8" height="26.9" fill="#b81a1a"/><rect x="423.23" y="353.0" width="3.40" height="17.6" fill="#ff1a1a"/><rect x="429.87" y="350.5" width="0.8" height="37.6" fill="#3cc83c"/><rect x="428.92" y="350.9" width="2.70" height="18.8" fill="#000" stroke="#48d848" stroke-width="0.75"/><rect x="435.20" y="297.1" width="0.8" height="65.9" fill="#3cc83c"/><rect x="434.25" y="299.8" width="2.70" height="55.1" fill="#000" stroke="#48d848" stroke-width="0.75"/><rect x="440.53" y="300.1" width="0.8" height="39.3" fill="#b81a1a"/><rect x="439.23" y="300.1" width="3.40" height="16.9" fill="#ff1a1a"/><rect x="445.87" y="282.9" width="0.8" height="40.0" fill="#3cc83c"/><rect x="444.92" y="286.4" width="2.70" height="30.8" fill="#000" stroke="#48d848" stroke-width="0.75"/><rect x="451.20" y="278.5" width="0.8" height="34.4" fill="#3cc83c"/><rect x="450.25" y="278.8" width="2.70" height="8.5" fill="#000" stroke="#48d848" stroke-width="0.75"/><rect x="456.53" y="231.2" width="0.8" height="58.8" fill="#3cc83c"/><rect x="455.58" y="243.1" width="2.70" height="29.9" fill="#000" stroke="#48d848" stroke-width="0.75"/><rect x="461.87" y="240.0" width="0.8" height="26.5" fill="#b81a1a"/><rect x="460.57" y="242.4" width="3.40" height="16.8" fill="#ff1a1a"/><rect x="467.20" y="210.0" width="0.8" height="49.4" fill="#3cc83c"/><rect x="466.25" y="219.3" width="2.70" height="38.6" fill="#000" stroke="#48d848" stroke-width="0.75"/><rect x="472.53" y="218.9" width="0.8" height="20.8" fill="#b81a1a"/><rect x="471.23" y="218.9" width="3.40" height="19.9" fill="#ff1a1a"/><rect x="477.87" y="226.0" width="0.8" height="36.4" fill="#b81a1a"/><rect x="476.57" y="237.4" width="3.40" height="20.8" fill="#ff1a1a"/><rect x="483.20" y="231.2" width="0.8" height="27.4" fill="#3cc83c"/><rect x="482.25" y="237.4" width="2.70" height="20.2" fill="#000" stroke="#48d848" stroke-width="0.75"/><rect x="488.53" y="175.9" width="0.8" height="61.5" fill="#3cc83c"/><rect x="487.58" y="178.6" width="2.70" height="57.9" fill="#000" stroke="#48d848" stroke-width="0.75"/><rect x="493.87" y="151.2" width="0.8" height="49.4" fill="#3cc83c"/><rect x="492.92" y="155.1" width="2.70" height="24.0" fill="#000" stroke="#48d848" stroke-width="0.75"/><rect x="499.20" y="147.6" width="0.8" height="30.6" fill="#b81a1a"/><rect x="497.90" y="153.5" width="3.40" height="12.2" fill="#ff1a1a"/><rect x="504.53" y="156.4" width="0.8" height="41.9" fill="#b81a1a"/><rect x="503.23" y="164.8" width="3.40" height="15.8" fill="#ff1a1a"/><rect x="509.87" y="178.9" width="0.8" height="89.9" fill="#b81a1a"/><rect x="508.57" y="178.9" width="3.40" height="60.5" fill="#ff1a1a"/><rect x="515.20" y="199.1" width="0.8" height="52.4" fill="#3cc83c"/><rect x="514.25" y="233.7" width="2.70" height="5.7" fill="#000" stroke="#48d848" stroke-width="0.75"/><rect x="520.53" y="201.1" width="0.8" height="46.0" fill="#b81a1a"/><rect x="519.23" y="233.0" width="3.40" height="13.4" fill="#ff1a1a"/><rect x="525.87" y="196.8" width="0.8" height="61.2" fill="#b81a1a"/><rect x="524.57" y="245.8" width="3.40" height="11.5" fill="#ff1a1a"/><rect x="531.20" y="181.2" width="0.8" height="100.0" fill="#3cc83c"/><rect x="530.25" y="219.2" width="2.70" height="36.9" fill="#000" stroke="#48d848" stroke-width="0.75"/><rect x="536.53" y="181.2" width="0.8" height="83.5" fill="#b81a1a"/><rect x="535.23" y="217.6" width="3.40" height="38.8" fill="#ff1a1a"/><rect x="541.87" y="169.4" width="0.8" height="86.4" fill="#3cc83c"/><rect x="540.92" y="173.8" width="2.70" height="81.2" fill="#000" stroke="#48d848" stroke-width="0.75"/><rect x="547.20" y="159.3" width="0.8" height="79.5" fill="#b81a1a"/><rect x="545.90" y="172.5" width="3.40" height="45.2" fill="#ff1a1a"/><rect x="552.53" y="169.4" width="0.8" height="85.9" fill="#3cc83c"/><rect x="551.58" y="174.5" width="2.70" height="46.4" fill="#000" stroke="#48d848" stroke-width="0.75"/><rect x="557.87" y="148.9" width="0.8" height="62.1" fill="#b81a1a"/><rect x="556.57" y="174.1" width="3.40" height="27.5" fill="#ff1a1a"/><rect x="563.20" y="169.4" width="0.8" height="87.1" fill="#3cc83c"/><rect x="562.25" y="184.6" width="2.70" height="36.9" fill="#000" stroke="#48d848" stroke-width="0.75"/><rect x="568.53" y="165.4" width="0.8" height="155.2" fill="#b81a1a"/><rect x="567.23" y="184.2" width="3.40" height="73.4" fill="#ff1a1a"/><rect x="573.87" y="254.1" width="0.8" height="142.9" fill="#b81a1a"/><rect x="572.57" y="258.8" width="3.40" height="101.8" fill="#ff1a1a"/><rect x="579.20" y="314.7" width="0.8" height="77.2" fill="#3cc83c"/><rect x="578.25" y="331.1" width="2.70" height="29.2" fill="#000" stroke="#48d848" stroke-width="0.75"/><rect x="584.53" y="292.1" width="0.8" height="84.3" fill="#b81a1a"/><rect x="583.23" y="330.0" width="3.40" height="27.1" fill="#ff1a1a"/><rect x="589.87" y="312.4" width="0.8" height="63.5" fill="#3cc83c"/><rect x="588.92" y="337.4" width="2.70" height="19.3" fill="#000" stroke="#48d848" stroke-width="0.75"/><rect x="595.20" y="338.7" width="0.8" height="72.0" fill="#b81a1a"/><rect x="593.90" y="339.4" width="3.40" height="71.3" fill="#ff1a1a"/><rect x="600.53" y="391.2" width="0.8" height="53.5" fill="#b81a1a"/><rect x="599.23" y="408.8" width="3.40" height="11.8" fill="#ff1a1a"/><rect x="605.87" y="404.6" width="0.8" height="20.7" fill="#3cc83c"/><rect x="604.92" y="404.9" width="2.70" height="15.3" fill="#000" stroke="#48d848" stroke-width="0.75"/><rect x="611.20" y="365.3" width="0.8" height="55.3" fill="#3cc83c"/><rect x="610.25" y="373.4" width="2.70" height="31.5" fill="#000" stroke="#48d848" stroke-width="0.75"/><rect x="616.53" y="348.8" width="0.8" height="84.2" fill="#b81a1a"/><rect x="615.23" y="373.5" width="3.40" height="31.8" fill="#ff1a1a"/><rect x="621.87" y="335.9" width="0.8" height="79.5" fill="#3cc83c"/><rect x="620.92" y="338.6" width="2.70" height="67.1" fill="#000" stroke="#48d848" stroke-width="0.75"/><rect x="627.20" y="328.4" width="0.8" height="44.7" fill="#b81a1a"/><rect x="625.90" y="338.2" width="3.40" height="2.8" fill="#ff1a1a"/><rect x="632.53" y="340.6" width="0.8" height="58.2" fill="#b81a1a"/><rect x="631.23" y="340.6" width="3.40" height="39.1" fill="#ff1a1a"/><rect x="637.87" y="329.4" width="0.8" height="50.6" fill="#3cc83c"/><rect x="636.92" y="336.3" width="2.70" height="42.7" fill="#000" stroke="#48d848" stroke-width="0.75"/><rect x="643.20" y="329.4" width="0.8" height="94.1" fill="#b81a1a"/><rect x="641.90" y="335.3" width="3.40" height="87.1" fill="#ff1a1a"/><rect x="648.53" y="368.2" width="0.8" height="53.4" fill="#3cc83c"/><rect x="647.58" y="383.4" width="2.70" height="37.4" fill="#000" stroke="#48d848" stroke-width="0.75"/><rect x="653.87" y="362.4" width="0.8" height="48.2" fill="#3cc83c"/><rect x="652.92" y="368.6" width="2.70" height="15.1" fill="#000" stroke="#48d848" stroke-width="0.75"/><rect x="659.20" y="354.1" width="0.8" height="58.8" fill="#b81a1a"/><rect x="657.90" y="369.4" width="3.40" height="38.8" fill="#ff1a1a"/><rect x="664.53" y="329.9" width="0.8" height="94.8" fill="#3cc83c"/><rect x="663.58" y="350.5" width="2.70" height="53.4" fill="#000" stroke="#48d848" stroke-width="0.75"/><rect x="669.87" y="342.4" width="0.8" height="33.6" fill="#b81a1a"/><rect x="668.57" y="350.1" width="3.40" height="4.7" fill="#ff1a1a"/><rect x="675.20" y="338.8" width="0.8" height="37.2" fill="#b81a1a"/><rect x="673.90" y="353.4" width="3.40" height="11.8" fill="#ff1a1a"/><rect x="680.53" y="362.8" width="0.8" height="76.6" fill="#b81a1a"/><rect x="679.23" y="364.7" width="3.40" height="42.4" fill="#ff1a1a"/><rect x="685.87" y="367.5" width="0.8" height="48.5" fill="#3cc83c"/><rect x="684.92" y="384.4" width="2.70" height="24.2" fill="#000" stroke="#48d848" stroke-width="0.75"/><rect x="691.20" y="342.4" width="0.8" height="50.6" fill="#3cc83c"/><rect x="690.25" y="374.0" width="2.70" height="11.1" fill="#000" stroke="#48d848" stroke-width="0.75"/><rect x="696.53" y="370.6" width="0.8" height="36.5" fill="#b81a1a"/><rect x="695.23" y="371.3" width="3.40" height="12.2" fill="#ff1a1a"/><rect x="701.87" y="343.8" width="0.8" height="55.4" fill="#3cc83c"/><rect x="700.92" y="362.9" width="2.70" height="20.2" fill="#000" stroke="#48d848" stroke-width="0.75"/><rect x="707.20" y="336.5" width="0.8" height="47.1" fill="#3cc83c"/><rect x="706.25" y="355.6" width="2.70" height="7.5" fill="#000" stroke="#48d848" stroke-width="0.75"/><rect x="712.53" y="295.3" width="0.8" height="61.2" fill="#3cc83c"/><rect x="711.58" y="319.2" width="2.70" height="36.2" fill="#000" stroke="#48d848" stroke-width="0.75"/><rect x="717.87" y="276.5" width="0.8" height="45.9" fill="#3cc83c"/><rect x="716.92" y="286.2" width="2.70" height="32.2" fill="#000" stroke="#48d848" stroke-width="0.75"/><rect x="723.20" y="256.5" width="0.8" height="32.9" fill="#3cc83c"/><rect x="722.25" y="277.5" width="2.70" height="9.7" fill="#000" stroke="#48d848" stroke-width="0.75"/><rect x="728.53" y="267.1" width="0.8" height="27.5" fill="#3cc83c"/><rect x="727.58" y="274.5" width="2.70" height="2.4" fill="#000" stroke="#48d848" stroke-width="0.75"/><rect x="733.87" y="270.6" width="0.8" height="42.4" fill="#b81a1a"/><rect x="732.57" y="272.5" width="3.40" height="39.3" fill="#ff1a1a"/><rect x="739.20" y="288.2" width="0.8" height="74.1" fill="#b81a1a"/><rect x="737.90" y="311.1" width="3.40" height="50.8" fill="#ff1a1a"/><rect x="744.53" y="344.7" width="0.8" height="34.6" fill="#3cc83c"/><rect x="743.58" y="352.8" width="2.70" height="8.0" fill="#000" stroke="#48d848" stroke-width="0.75"/><rect x="749.87" y="336.9" width="0.8" height="26.6" fill="#3cc83c"/><rect x="748.92" y="349.8" width="2.70" height="2.4" fill="#000" stroke="#48d848" stroke-width="0.75"/><rect x="755.20" y="305.4" width="0.8" height="49.4" fill="#3cc83c"/><rect x="754.25" y="307.4" width="2.70" height="41.7" fill="#000" stroke="#48d848" stroke-width="0.75"/><rect x="760.53" y="294.6" width="0.8" height="20.2" fill="#3cc83c"/><rect x="759.58" y="309.1" width="2.70" height="0.7" fill="#000" stroke="#48d848" stroke-width="0.75"/><rect x="765.87" y="306.4" width="0.8" height="39.5" fill="#b81a1a"/><rect x="764.57" y="308.2" width="3.40" height="11.8" fill="#ff1a1a"/><rect x="771.20" y="281.4" width="0.8" height="41.5" fill="#3cc83c"/><rect x="770.25" y="282.4" width="2.70" height="36.7" fill="#000" stroke="#48d848" stroke-width="0.75"/><rect x="776.53" y="252.3" width="0.8" height="32.4" fill="#3cc83c"/><rect x="775.58" y="279.2" width="2.70" height="2.5" fill="#000" stroke="#48d848" stroke-width="0.75"/><rect x="781.87" y="269.5" width="0.8" height="16.5" fill="#3cc83c"/><rect x="780.92" y="278.6" width="2.70" height="4.7" fill="#000" stroke="#48d848" stroke-width="0.75"/><rect x="787.20" y="273.5" width="0.8" height="50.6" fill="#b81a1a"/><rect x="785.90" y="278.2" width="3.40" height="5.4" fill="#ff1a1a"/><rect x="792.53" y="282.9" width="0.8" height="41.6" fill="#b81a1a"/><rect x="791.23" y="283.6" width="3.40" height="29.2" fill="#ff1a1a"/><rect x="797.87" y="273.5" width="0.8" height="45.9" fill="#3cc83c"/><rect x="796.92" y="285.6" width="2.70" height="27.5" fill="#000" stroke="#48d848" stroke-width="0.75"/><rect x="803.20" y="251.6" width="0.8" height="34.8" fill="#3cc83c"/><rect x="802.25" y="252.0" width="2.70" height="33.7" fill="#000" stroke="#48d848" stroke-width="0.75"/><rect x="808.53" y="224.1" width="0.8" height="32.9" fill="#3cc83c"/><rect x="807.58" y="238.6" width="2.70" height="16.5" fill="#000" stroke="#48d848" stroke-width="0.75"/><rect x="813.87" y="231.9" width="0.8" height="18.1" fill="#3cc83c"/><rect x="812.92" y="236.2" width="2.70" height="1.7" fill="#000" stroke="#48d848" stroke-width="0.75"/><rect x="819.20" y="231.2" width="0.8" height="40.0" fill="#b81a1a"/><rect x="817.90" y="235.9" width="3.40" height="24.7" fill="#ff1a1a"/><rect x="824.53" y="224.8" width="0.8" height="48.0" fill="#3cc83c"/><rect x="823.58" y="232.7" width="2.70" height="28.0" fill="#000" stroke="#48d848" stroke-width="0.75"/><rect x="829.87" y="220.1" width="0.8" height="19.8" fill="#3cc83c"/><rect x="828.92" y="222.8" width="2.70" height="9.7" fill="#000" stroke="#48d848" stroke-width="0.75"/><rect x="835.20" y="212.4" width="0.8" height="44.0" fill="#3cc83c"/><rect x="834.25" y="216.7" width="2.70" height="5.9" fill="#000" stroke="#48d848" stroke-width="0.75"/><rect x="840.53" y="204.6" width="0.8" height="23.5" fill="#b81a1a"/><rect x="839.23" y="217.1" width="3.40" height="10.1" fill="#ff1a1a"/><rect x="845.87" y="225.8" width="0.8" height="73.4" fill="#b81a1a"/><rect x="844.57" y="225.8" width="3.40" height="50.1" fill="#ff1a1a"/><rect x="851.20" y="256.0" width="0.8" height="40.5" fill="#b81a1a"/><rect x="849.90" y="276.5" width="3.40" height="12.5" fill="#ff1a1a"/><rect x="856.53" y="264.0" width="0.8" height="43.1" fill="#3cc83c"/><rect x="855.58" y="274.5" width="2.70" height="14.1" fill="#000" stroke="#48d848" stroke-width="0.75"/><rect x="861.87" y="246.6" width="0.8" height="31.5" fill="#3cc83c"/><rect x="860.92" y="265.8" width="2.70" height="9.7" fill="#000" stroke="#48d848" stroke-width="0.75"/><rect x="867.20" y="263.5" width="0.8" height="52.9" fill="#b81a1a"/><rect x="865.90" y="264.0" width="3.40" height="45.4" fill="#ff1a1a"/><rect x="872.53" y="287.1" width="0.8" height="25.9" fill="#b81a1a"/><rect x="871.23" y="308.2" width="3.40" height="1.9" fill="#ff1a1a"/><rect x="877.87" y="282.8" width="0.8" height="34.8" fill="#3cc83c"/><rect x="876.92" y="290.2" width="2.70" height="19.5" fill="#000" stroke="#48d848" stroke-width="0.75"/><rect x="883.20" y="284.2" width="0.8" height="78.6" fill="#b81a1a"/><rect x="881.90" y="288.2" width="3.40" height="74.6" fill="#ff1a1a"/><rect x="888.53" y="352.5" width="0.8" height="23.5" fill="#3cc83c"/><rect x="887.58" y="356.1" width="2.70" height="6.4" fill="#000" stroke="#48d848" stroke-width="0.75"/><rect x="893.87" y="307.1" width="0.8" height="50.1" fill="#3cc83c"/><rect x="892.92" y="312.8" width="2.70" height="43.3" fill="#000" stroke="#48d848" stroke-width="0.75"/><rect x="899.20" y="300.0" width="0.8" height="33.6" fill="#3cc83c"/><rect x="898.25" y="310.5" width="2.70" height="0.3" fill="#000" stroke="#48d848" stroke-width="0.75"/><rect x="904.53" y="309.4" width="0.8" height="57.9" fill="#b81a1a"/><rect x="903.23" y="310.6" width="3.40" height="38.1" fill="#ff1a1a"/><rect x="909.87" y="317.6" width="0.8" height="40.0" fill="#3cc83c"/><rect x="908.92" y="328.6" width="2.70" height="19.5" fill="#000" stroke="#48d848" stroke-width="0.75"/><rect x="915.20" y="296.0" width="0.8" height="42.4" fill="#3cc83c"/><rect x="914.25" y="318.8" width="2.70" height="10.2" fill="#000" stroke="#48d848" stroke-width="0.75"/><rect x="920.53" y="313.4" width="0.8" height="59.5" fill="#b81a1a"/><rect x="919.23" y="317.6" width="3.40" height="54.1" fill="#ff1a1a"/><rect x="925.87" y="365.9" width="0.8" height="28.9" fill="#b81a1a"/><rect x="924.57" y="370.6" width="3.40" height="22.8" fill="#ff1a1a"/><rect x="931.20" y="371.8" width="0.8" height="23.1" fill="#3cc83c"/><rect x="930.25" y="392.8" width="2.70" height="0.3" fill="#000" stroke="#48d848" stroke-width="0.75"/><rect x="936.53" y="372.9" width="0.8" height="23.5" fill="#3cc83c"/><rect x="935.58" y="378.7" width="2.70" height="9.2" fill="#000" stroke="#48d848" stroke-width="0.75"/><rect x="941.87" y="376.9" width="0.8" height="39.5" fill="#b81a1a"/><rect x="940.57" y="377.6" width="3.40" height="21.2" fill="#ff1a1a"/><rect x="947.20" y="374.1" width="0.8" height="48.2" fill="#b81a1a"/><rect x="945.90" y="394.8" width="3.40" height="22.1" fill="#ff1a1a"/><rect x="952.53" y="403.6" width="0.8" height="21.8" fill="#b81a1a"/><rect x="951.23" y="416.1" width="3.40" height="8.0" fill="#ff1a1a"/><rect x="957.87" y="418.4" width="0.8" height="9.9" fill="#b81a1a"/><rect x="956.57" y="424.5" width="3.40" height="3.1" fill="#ff1a1a"/><rect x="963.20" y="400.4" width="0.8" height="26.4" fill="#3cc83c"/><rect x="962.25" y="416.8" width="2.70" height="7.5" fill="#000" stroke="#48d848" stroke-width="0.75"/><rect x="968.53" y="409.6" width="0.8" height="20.8" fill="#b81a1a"/><rect x="967.23" y="416.1" width="3.40" height="5.4" fill="#ff1a1a"/><rect x="973.87" y="395.8" width="0.8" height="26.2" fill="#3cc83c"/><rect x="972.92" y="404.1" width="2.70" height="16.7" fill="#000" stroke="#48d848" stroke-width="0.75"/><rect x="979.20" y="397.8" width="0.8" height="31.8" fill="#b81a1a"/><rect x="977.90" y="403.7" width="3.40" height="20.8" fill="#ff1a1a"/><rect x="984.53" y="420.1" width="0.8" height="10.2" fill="#b81a1a"/><rect x="983.23" y="424.3" width="3.40" height="1.1" fill="#ff1a1a"/><rect x="989.87" y="408.5" width="0.8" height="16.5" fill="#3cc83c"/><rect x="988.92" y="420.4" width="2.70" height="3.8" fill="#000" stroke="#48d848" stroke-width="0.75"/><rect x="995.20" y="403.3" width="0.8" height="21.3" fill="#3cc83c"/><rect x="994.25" y="404.3" width="2.70" height="19.7" fill="#000" stroke="#48d848" stroke-width="0.75"/><rect x="1000.53" y="394.7" width="0.8" height="37.2" fill="#b81a1a"/><rect x="999.23" y="403.9" width="3.40" height="27.1" fill="#ff1a1a"/></g>
</g>
<rect x="1171.5" y="107" width="52" height="152" fill="#000" stroke="#d4d4d4" stroke-width="1"/>
<rect x="1197" y="108" width="1" height="148.5" fill="#f0f0f0"/>
<rect x="1184" y="184" width="26.7" height="67.2" fill="#fff"/>
<rect x="1157.5" y="266.3" width="66" height="145.7" fill="#000" stroke="#d4d4d4" stroke-width="1"/>
<rect x="1230.5" y="99" width="1.2" height="519" fill="#b0b0b0"/>
<rect x="2" y="617" width="1229.5" height="1.2" fill="#b0b0b0"/>
<polygon points="1004,99 1014,99 1009,104.5" fill="#c0c0c0"/>
</svg>
<svg class="a" style="left:5px;top:104px;" width="8" height="5" viewBox="0 0 8 5"><path d="M0 0 H7.8 L3.9 4.2Z" fill="#fff"/></svg><div class="t" style="left:16.6px;top:102.1px;font-size:10.3px;line-height:1;color:#f0f0f0;transform:scaleX(0.86);transform-origin:0 0">USDCAD,M5</div><div class="t" style="left:73.6px;top:102.1px;font-size:10.3px;line-height:1;color:#f0f0f0;transform:scaleX(0.935);transform-origin:0 0">1.32693 1.32706 1.32653 1.32653</div><div class="t" style="left:5.2px;top:108.4px;font-size:13px;line-height:1;color:#1c861c;letter-spacing:-0.25px">QMT_</div><div class="a" style="left:1231.5px;top:106.5px;width:1.5px;height:1px;background:#d0d0d0;"></div><div class="t" style="left:1236px;top:104.4px;font-size:10.2px;line-height:1;color:#ececec;letter-spacing:-0.1px">1.33130</div><div class="a" style="left:1231.5px;top:150.5px;width:1.5px;height:1px;background:#d0d0d0;"></div><div class="t" style="left:1236px;top:148.4px;font-size:10.2px;line-height:1;color:#ececec;letter-spacing:-0.1px">1.33065</div><div class="a" style="left:1231.5px;top:194.5px;width:1.5px;height:1px;background:#d0d0d0;"></div><div class="t" style="left:1236px;top:192.4px;font-size:10.2px;line-height:1;color:#ececec;letter-spacing:-0.1px">1.33000</div><div class="a" style="left:1231.5px;top:239.5px;width:1.5px;height:1px;background:#d0d0d0;"></div><div class="t" style="left:1236px;top:237.4px;font-size:10.2px;line-height:1;color:#ececec;letter-spacing:-0.1px">1.32935</div><div class="a" style="left:1231.5px;top:283.5px;width:1.5px;height:1px;background:#d0d0d0;"></div><div class="t" style="left:1236px;top:281.4px;font-size:10.2px;line-height:1;color:#ececec;letter-spacing:-0.1px">1.32870</div><div class="a" style="left:1231.5px;top:327.5px;width:1.5px;height:1px;background:#d0d0d0;"></div><div class="t" style="left:1236px;top:325.4px;font-size:10.2px;line-height:1;color:#ececec;letter-spacing:-0.1px">1.32805</div><div class="a" style="left:1231.5px;top:371.5px;width:1.5px;height:1px;background:#d0d0d0;"></div><div class="t" style="left:1236px;top:369.4px;font-size:10.2px;line-height:1;color:#ececec;letter-spacing:-0.1px">1.32740</div><div class="a" style="left:1231.5px;top:415.5px;width:1.5px;height:1px;background:#d0d0d0;"></div><div class="t" style="left:1236px;top:413.4px;font-size:10.2px;line-height:1;color:#ececec;letter-spacing:-0.1px">1.32675</div><div class="a" style="left:1231.5px;top:504.5px;width:1.5px;height:1px;background:#d0d0d0;"></div><div class="t" style="left:1236px;top:502.4px;font-size:10.2px;line-height:1;color:#ececec;letter-spacing:-0.1px">1.32545</div><div class="a" style="left:1231.5px;top:548.5px;width:1.5px;height:1px;background:#d0d0d0;"></div><div class="t" style="left:1236px;top:546.4px;font-size:10.2px;line-height:1;color:#ececec;letter-spacing:-0.1px">1.32480</div><div class="a" style="left:1231.5px;top:592.5px;width:1.5px;height:1px;background:#d0d0d0;"></div><div class="t" style="left:1236px;top:590.4px;font-size:10.2px;line-height:1;color:#ececec;letter-spacing:-0.1px">1.32415</div><div class="a" style="left:1232.3px;top:425.2px;width:40.5px;height:11.2px;background:#fff;"></div><div class="t" style="left:1236px;top:426.4px;font-size:10.2px;line-height:1;color:#000;letter-spacing:-0.1px">1.32653</div><div class="a" style="left:1232px;top:456.8px;width:40.5px;height:17.2px;background:#dccbe6;"></div><div class="t" style="left:1236px;top:464.0px;font-size:10.2px;line-height:1;color:#222;letter-spacing:-0.1px">1.32600</div><div class="a" style="left:1234px;top:458px;width:37px;height:8.5px;background:#dccbe6;"></div><div class="t" style="left:1236px;top:458.4px;font-size:10.2px;line-height:1;color:#222;letter-spacing:-0.1px">1.32610</div><div class="a" style="left:3.4px;top:617px;width:1px;height:3px;background:#c0c0c0;"></div><div class="t" style="left:4.1px;top:620.9px;font-size:9.6px;line-height:1;color:#e8e8e8;transform:scaleX(0.97);transform-origin:0 0">16 Sep 2022</div><div class="a" style="left:88.6px;top:617px;width:1px;height:3px;background:#c0c0c0;"></div><div class="t" style="left:89.3px;top:620.9px;font-size:9.6px;line-height:1;color:#e8e8e8;transform:scaleX(0.97);transform-origin:0 0">16 Sep 09:35</div><div class="a" style="left:174px;top:617px;width:1px;height:3px;background:#c0c0c0;"></div><div class="t" style="left:174.7px;top:620.9px;font-size:9.6px;line-height:1;color:#e8e8e8;transform:scaleX(0.97);transform-origin:0 0">16 Sep 10:55</div><div class="a" style="left:259.3px;top:617px;width:1px;height:3px;background:#c0c0c0;"></div><div class="t" style="left:260.0px;top:620.9px;font-size:9.6px;line-height:1;color:#e8e8e8;transform:scaleX(0.97);transform-origin:0 0">16 Sep 12:15</div><div class="a" style="left:344.6px;top:617px;width:1px;height:3px;background:#c0c0c0;"></div><div class="t" style="left:345.3px;top:620.9px;font-size:9.6px;line-height:1;color:#e8e8e8;transform:scaleX(0.97);transform-origin:0 0">16 Sep 13:35</div><div class="a" style="left:430px;top:617px;width:1px;height:3px;background:#c0c0c0;"></div><div class="t" style="left:430.7px;top:620.9px;font-size:9.6px;line-height:1;color:#e8e8e8;transform:scaleX(0.97);transform-origin:0 0">16 Sep 14:55</div><div class="a" style="left:515.3px;top:617px;width:1px;height:3px;background:#c0c0c0;"></div><div class="t" style="left:516.0px;top:620.9px;font-size:9.6px;line-height:1;color:#e8e8e8;transform:scaleX(0.97);transform-origin:0 0">16 Sep 16:15</div><div class="a" style="left:600.6px;top:617px;width:1px;height:3px;background:#c0c0c0;"></div><div class="t" style="left:601.3000000000001px;top:620.9px;font-size:9.6px;line-height:1;color:#e8e8e8;transform:scaleX(0.97);transform-origin:0 0">16 Sep 17:35</div><div class="a" style="left:686px;top:617px;width:1px;height:3px;background:#c0c0c0;"></div><div class="t" style="left:686.7px;top:620.9px;font-size:9.6px;line-height:1;color:#e8e8e8;transform:scaleX(0.97);transform-origin:0 0">16 Sep 18:55</div><div class="a" style="left:771.3px;top:617px;width:1px;height:3px;background:#c0c0c0;"></div><div class="t" style="left:772.0px;top:620.9px;font-size:9.6px;line-height:1;color:#e8e8e8;transform:scaleX(0.97);transform-origin:0 0">16 Sep 20:15</div><div class="a" style="left:856.6px;top:617px;width:1px;height:3px;background:#c0c0c0;"></div><div class="t" style="left:857.3000000000001px;top:620.9px;font-size:9.6px;line-height:1;color:#e8e8e8;transform:scaleX(0.97);transform-origin:0 0">16 Sep 21:35</div><div class="a" style="left:942px;top:617px;width:1px;height:3px;background:#c0c0c0;"></div><div class="t" style="left:942.7px;top:620.9px;font-size:9.6px;line-height:1;color:#e8e8e8;transform:scaleX(0.97);transform-origin:0 0">16 Sep 22:55</div><div class="t" style="left:1157px;width:67px;text-align:center;top:275.0px;font-size:13px;line-height:15px;color:#f4f4f4">SH 32</div><div class="t" style="left:1157px;width:67px;text-align:center;top:299.0px;font-size:13px;line-height:15px;color:#f4f4f4">RS 36</div><div class="t" style="left:1157px;width:67px;text-align:center;top:323.0px;font-size:13px;line-height:15px;color:#f4f4f4">CCI -55</div><div class="t" style="left:1157px;width:67px;text-align:center;top:347.0px;font-size:13px;line-height:15px;color:#f4f4f4">V UP</div><div class="t" style="left:1157px;width:67px;text-align:center;top:371.0px;font-size:13px;line-height:15px;color:#f4f4f4">ADX 23</div><div class="t" style="left:1157px;width:67px;text-align:center;top:395.0px;font-size:13px;line-height:15px;color:#f4f4f4">BL/BR S</div><svg class="a" style="left:990px;top:440px;" width="20" height="20" viewBox="0 0 20 20"><path d="M10.4 2 L17 8.5 L17 13 L12.2 8.5 L12.2 18.4 L8.9 18.4 L8.9 8.5 L4 13 L4 8.5 Z" fill="#fff"/></svg>
<div class="a" style="left:42.4px;top:112.6px;width:379.8px;height:212.20000000000002px;background:#f0f0f0;border:1px solid #d8d8d8;border-right-color:#fafafa;border-bottom-color:#fafafa"></div><div class="a" style="left:43.4px;top:113.6px;width:377.8px;height:29px;background:#fff;"></div><div class="a" style="left:51px;top:119px;width:14px;height:14px"><svg class="a" width="14" height="14" viewBox="0 0 40 40" style="left:0;top:0"><circle cx="20" cy="36" r="3.2" fill="#f0cc40" stroke="#b08a18" stroke-width="1"/><path d="M20 2 C11 2 10 10 10 16 C10 24 7 27 2 31 C2 34 38 34 38 31 C33 27 30 24 30 16 C30 10 29 2 20 2Z" fill="#f3d34e" stroke="#b08a18" stroke-width="1.3"/><path d="M18 5 C14 7 14 14 14 18 C14 23 12 26 9 29 L16 29 C18 25 18 20 18 16 C18 11 19 7 21 5Z" fill="#fcefa0" opacity="0.8"/><path d="M5 29.5 Q20 26 35 29.5" fill="none" stroke="#c9a020" stroke-width="1"/><circle cx="20" cy="2.5" r="2" fill="#e8c030"/></svg></div><div class="t" style="left:69.5px;top:122.2px;font-size:12.2px;line-height:1;color:#8c8c8c;">Алерт</div><div class="t" style="left:349px;top:121.6px;font-size:12px;line-height:1;color:#a6a6a6;">?</div><svg class="a" style="left:393px;top:121px;" width="12" height="12" viewBox="0 0 12 12"><path d="M0.5 0.5 L11.5 11.5 M11.5 0.5 L0.5 11.5" stroke="#8c8c8c" stroke-width="1"/></svg><div class="a" style="left:55px;top:153px;width:40px;height:40px"><svg class="a" width="40" height="40" viewBox="0 0 40 40" style="left:0;top:0"><circle cx="20" cy="36" r="3.2" fill="#f0cc40" stroke="#b08a18" stroke-width="1"/><path d="M20 2 C11 2 10 10 10 16 C10 24 7 27 2 31 C2 34 38 34 38 31 C33 27 30 24 30 16 C30 10 29 2 20 2Z" fill="#f3d34e" stroke="#b08a18" stroke-width="1.3"/><path d="M18 5 C14 7 14 14 14 18 C14 23 12 26 9 29 L16 29 C18 25 18 20 18 16 C18 11 19 7 21 5Z" fill="#fcefa0" opacity="0.8"/><path d="M5 29.5 Q20 26 35 29.5" fill="none" stroke="#c9a020" stroke-width="1"/><circle cx="20" cy="2.5" r="2" fill="#e8c030"/></svg></div><div class="t" style="left:113px;top:159.6px;font-size:10.4px;line-height:1;color:#111;">QMT_ USDCAD M5 сигнал BUY</div><div class="a" style="left:397.5px;top:158px;width:1px;height:46px;background:#e2e2e2;"></div><svg class="a" style="left:402px;top:163px;" width="9" height="38" viewBox="0 0 9 38"><path d="M0.5 6.5 L4.5 2 L8.5 6.5 M0.5 30 L4.5 34.5 L8.5 30" fill="none" stroke="#a8a8a8" stroke-width="1.1"/></svg><div class="a" style="left:50px;top:210px;width:365px;height:78px;background:#fff;border:1px solid #a6a6a6"></div><div class="a" style="left:51px;top:211px;width:363px;height:20.5px;background:#ebebeb;"></div><div class="a" style="left:51px;top:231px;width:363px;height:1px;background:#d8d8d8;"></div><div class="a" style="left:140px;top:211px;width:1px;height:20.5px;background:#d0d0d0;"></div><div class="a" style="left:54px;top:214px;width:13px;height:13px"><svg class="a" width="13" height="13" viewBox="0 0 40 40" style="left:0;top:0"><circle cx="20" cy="36" r="3.2" fill="#f0cc40" stroke="#b08a18" stroke-width="1"/><path d="M20 2 C11 2 10 10 10 16 C10 24 7 27 2 31 C2 34 38 34 38 31 C33 27 30 24 30 16 C30 10 29 2 20 2Z" fill="#f3d34e" stroke="#b08a18" stroke-width="1.3"/><path d="M18 5 C14 7 14 14 14 18 C14 23 12 26 9 29 L16 29 C18 25 18 20 18 16 C18 11 19 7 21 5Z" fill="#fcefa0" opacity="0.8"/><path d="M5 29.5 Q20 26 35 29.5" fill="none" stroke="#c9a020" stroke-width="1"/><circle cx="20" cy="2.5" r="2" fill="#e8c030"/></svg></div><div class="t" style="left:72px;top:216.3px;font-size:11.4px;line-height:1;color:#111;">19:13:06</div><div class="t" style="left:145.4px;top:216.8px;font-size:10.4px;line-height:1;color:#111;">QMT_ USDCAD M5 сигнал BUY</div><div class="a" style="left:195px;top:296px;width:74px;height:21px;background:#e1e1e1;border:1px solid #adadad"></div><div class="t" style="left:224px;top:301.0px;font-size:11px;line-height:1;color:#111;">OK</div>
<div class="a" style="left:0px;top:634.7px;width:1280px;height:2.7px;background:#a8a8a8;"></div><div class="a" style="left:0px;top:637.4px;width:1280px;height:19.6px;background:#f0f0f0;"></div><div class="a" style="left:0px;top:637.4px;width:1280px;height:1.1px;background:#fafafa;"></div><div class="a" style="left:0px;top:637px;width:1.5px;height:20px;background:#8a8a8a;"></div><div class="a" style="left:0px;top:657px;width:1280px;height:1px;background:#fafafa;"></div><div class="t" style="left:15.6px;top:641.7px;font-size:12px;line-height:1;color:#7c7c7c;transform:scaleX(0.915);transform-origin:0 0">EURAUD,M1</div><div class="t" style="left:103.5px;top:641.7px;font-size:12px;line-height:1;color:#7c7c7c;transform:scaleX(0.915);transform-origin:0 0">EURCHF,M5</div><div class="t" style="left:188.2px;top:641.7px;font-size:12px;line-height:1;color:#7c7c7c;transform:scaleX(0.915);transform-origin:0 0">USDJPY,M15</div><div class="t" style="left:364.7px;top:641.7px;font-size:12px;line-height:1;color:#7c7c7c;transform:scaleX(0.915);transform-origin:0 0">AUDCHF,M5</div><div class="t" style="left:452px;top:641.7px;font-size:12px;line-height:1;color:#7c7c7c;transform:scaleX(0.915);transform-origin:0 0">EURJPY,M5</div><div class="t" style="left:533px;top:641.7px;font-size:12px;line-height:1;color:#7c7c7c;transform:scaleX(0.915);transform-origin:0 0">CADJPY,M5</div><div class="t" style="left:616.3px;top:641.7px;font-size:12px;line-height:1;color:#7c7c7c;transform:scaleX(0.915);transform-origin:0 0">EURGBP,M5</div><div class="t" style="left:700.2px;top:641.7px;font-size:12px;line-height:1;color:#7c7c7c;transform:scaleX(0.915);transform-origin:0 0">EURUSD,M5</div><div class="t" style="left:785.2px;top:641.7px;font-size:12px;line-height:1;color:#7c7c7c;transform:scaleX(0.915);transform-origin:0 0">NZDUSD,M5</div><div class="a" style="left:93px;top:640px;width:1.3px;height:15px;background:#a8a8a8;"></div><div class="a" style="left:178px;top:640px;width:1.3px;height:15px;background:#a8a8a8;"></div><div class="a" style="left:442px;top:640px;width:1.3px;height:15px;background:#a8a8a8;"></div><div class="a" style="left:521px;top:640px;width:1.3px;height:15px;background:#a8a8a8;"></div><div class="a" style="left:605px;top:640px;width:1.3px;height:15px;background:#a8a8a8;"></div><div class="a" style="left:690px;top:640px;width:1.3px;height:15px;background:#a8a8a8;"></div><div class="a" style="left:775.7px;top:640px;width:1.3px;height:15px;background:#a8a8a8;"></div><div class="a" style="left:863.3px;top:640px;width:1.3px;height:15px;background:#a8a8a8;"></div><div class="a" style="left:266px;top:636px;width:88px;height:20.5px;background:#fff;border:1px solid #6a6a6a;border-top:1px solid #8a8a8a"></div><div class="t" style="left:276px;top:641.7px;font-size:12px;line-height:1;color:#1a1a1a;transform:scaleX(0.91);transform-origin:0 0">USDCAD,M5</div><svg class="a" style="left:1246px;top:641px;" width="30" height="10" viewBox="0 0 30 10"><path d="M6 1 L2 5 L6 9Z M22 1 L26 5 L22 9Z" fill="#b8b8b8"/></svg><div class="a" style="left:0px;top:657px;width:1280px;height:23px;background:#f0f0f0;"></div><div class="t" style="left:2px;top:664.9px;font-size:11.7px;line-height:1;color:#222;">Для вызова справки нажмите F1</div><div class="a" style="left:572.5px;top:659px;width:1px;height:21px;background:#d4d4d4;"></div><div class="a" style="left:689.4px;top:659px;width:1px;height:21px;background:#d4d4d4;"></div><div class="a" style="left:796.4px;top:659px;width:1px;height:21px;background:#d4d4d4;"></div><div class="a" style="left:870.2px;top:659px;width:1px;height:21px;background:#d4d4d4;"></div><div class="a" style="left:942.5px;top:659px;width:1px;height:21px;background:#d4d4d4;"></div><div class="a" style="left:1012px;top:659px;width:1px;height:21px;background:#d4d4d4;"></div><div class="a" style="left:1083.5px;top:659px;width:1px;height:21px;background:#d4d4d4;"></div><div class="a" style="left:1153px;top:659px;width:1px;height:21px;background:#d4d4d4;"></div><div class="t" style="left:576.5px;top:664.8px;font-size:11.8px;line-height:1;color:#222;">Default</div><div class="t" style="left:693.3px;top:664.8px;font-size:11.8px;line-height:1;color:#222;">2022.09.16 18:05</div><div class="t" style="left:800.4px;top:664.8px;font-size:11.8px;line-height:1;color:#222;">O: 1.32785</div><div class="t" style="left:874px;top:664.8px;font-size:11.8px;line-height:1;color:#222;">H: 1.32787</div><div class="t" style="left:947px;top:664.8px;font-size:11.8px;line-height:1;color:#222;">L: 1.32702</div><div class="t" style="left:1015.8px;top:664.8px;font-size:11.8px;line-height:1;color:#222;">C: 1.32729</div><div class="t" style="left:1087.6px;top:664.8px;font-size:11.8px;line-height:1;color:#222;">V: 652</div><div class="t" style="left:1186.5px;top:664.8px;font-size:11.8px;line-height:1;color:#222;">36/1 kb</div><svg class="a" style="left:1156px;top:662.5px;" width="28" height="14" viewBox="0 0 28 14"><rect x="0.0" y="0" width="1.8" height="9.3" fill="#4e6e12"/><rect x="0.0" y="10.1" width="1.8" height="3.2" fill="#0c2c44"/><rect x="3.4" y="0" width="1.8" height="8.3" fill="#4e6e12"/><rect x="3.4" y="9.1" width="1.8" height="4.2" fill="#0c2c44"/><rect x="6.8" y="0" width="1.8" height="7.3" fill="#4e6e12"/><rect x="6.8" y="8.1" width="1.8" height="5.2" fill="#0c2c44"/><rect x="10.2" y="0" width="1.8" height="6.3" fill="#4e6e12"/><rect x="10.2" y="7.1" width="1.8" height="6.2" fill="#0c2c44"/><rect x="13.6" y="0" width="1.8" height="5.3" fill="#4e6e12"/><rect x="13.6" y="6.1" width="1.8" height="7.2" fill="#0c2c44"/><rect x="17.0" y="0" width="1.8" height="4.3" fill="#4e6e12"/><rect x="17.0" y="5.1" width="1.8" height="8.2" fill="#0c2c44"/><rect x="20.4" y="0" width="1.8" height="3.3" fill="#4e6e12"/><rect x="20.4" y="4.1" width="1.8" height="9.2" fill="#0c2c44"/><rect x="23.8" y="0" width="1.8" height="2.3" fill="#4e6e12"/><rect x="23.8" y="3.1" width="1.8" height="10.2" fill="#0c2c44"/></svg>
</body></html>
